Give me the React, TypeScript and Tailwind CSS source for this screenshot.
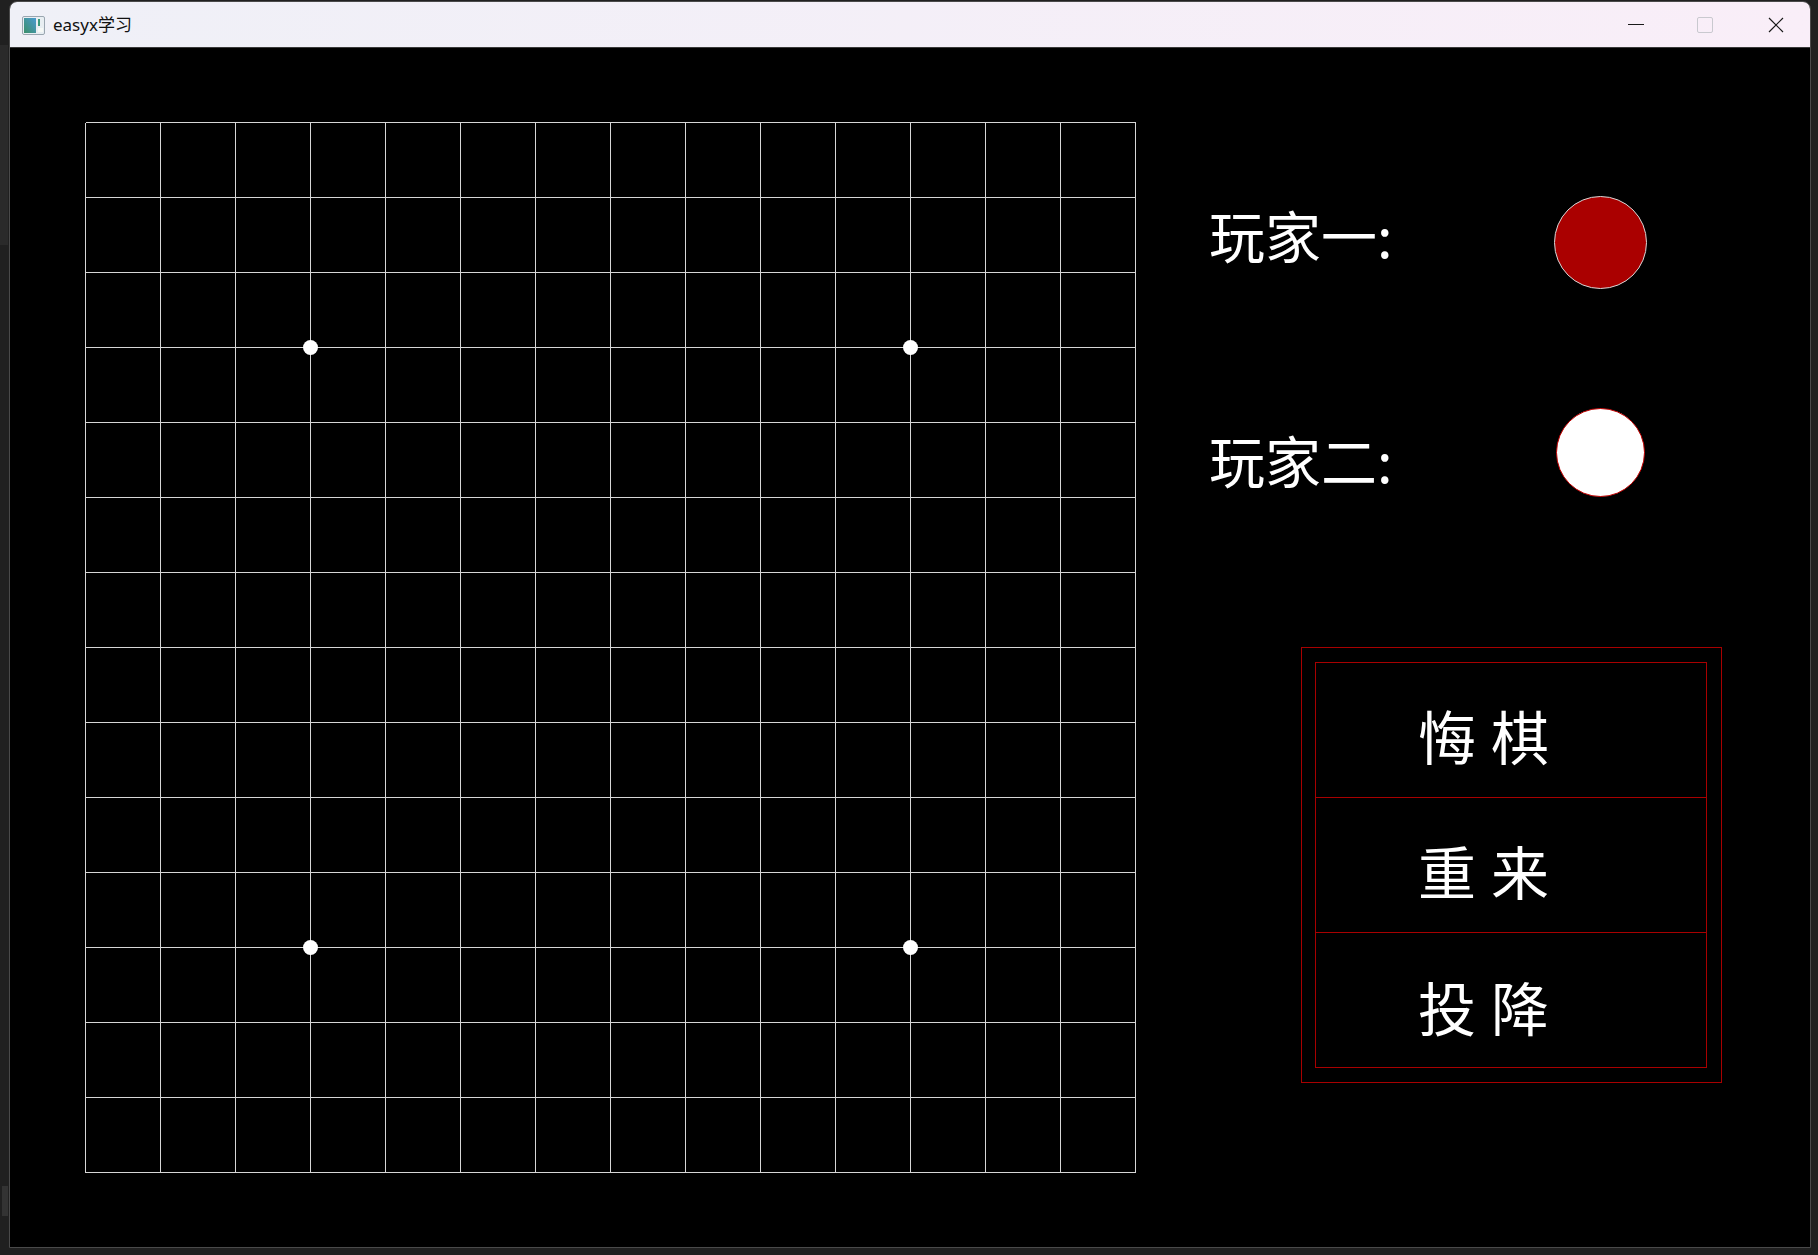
import React from "react";

const CELL = 75;
const N = 15;

function Board() {
  const lines: React.ReactNode[] = [];
  for (let i = 0; i < N; i++) {
    const p = 1.5 + i * CELL;
    lines.push(<line key={`v${i}`} x1={p} y1={1.5} x2={p} y2={1.5 + (N - 1) * CELL} />);
    lines.push(<line key={`h${i}`} x1={1.5} y1={p} x2={1.5 + (N - 1) * CELL} y2={p} />);
  }
  const stars = [
    [3, 3],
    [11, 3],
    [3, 11],
    [11, 11],
  ];
  return (
    <svg width={1053} height={1053} className="shrink-0 block">
      <g stroke="#d6d6d6" strokeWidth={1.5} shapeRendering="crispEdges">
        {lines}
      </g>
      {stars.map(([c, r]) => (
        <circle key={`${c}-${r}`} cx={1.5 + c * CELL} cy={1.5 + r * CELL} r={7.5} fill="#ffffff" />
      ))}
    </svg>
  );
}

function AppIcon() {
  return (
    <svg width="23" height="19" viewBox="0 0 23 19" className="block">
      <defs>
        <linearGradient id="ig" x1="0" y1="1" x2="1" y2="0">
          <stop offset="0" stopColor="#3b8f6a" />
          <stop offset="1" stopColor="#4a9bd0" />
        </linearGradient>
      </defs>
      <rect x="0.5" y="0.5" width="22" height="18" rx="1.5" fill="#e8eef2" stroke="#9aa6b0" />
      <rect x="2" y="2" width="12" height="15" fill="url(#ig)" />
      <rect x="16" y="3" width="2" height="7" fill="#3a9a7a" />
      <rect x="16" y="12" width="5" height="4" fill="#f6f9f6" />
    </svg>
  );
}

const cjk = { fontFamily: '"Noto Sans CJK SC", "Noto Sans", sans-serif' };

export default function App() {
  return (
    <div className="w-[1818px] h-[1255px] bg-[#202020] overflow-hidden relative">
      <div className="absolute left-0 top-[45px] w-[8px] h-[200px] bg-[#2a2a2a]" />
      <div className="absolute left-[2px] top-[1186px] w-[6px] h-[30px] bg-[#333333]" />
      <div className="pl-[9px] pt-[1px]">
        <div className="w-[1802px] h-[1247px] border border-[#4a4a4a] rounded-t-[8px] overflow-hidden flex flex-col bg-black">
          {/* title bar */}
          <div className="h-[46px] shrink-0 flex items-center bg-gradient-to-r from-[#eff0f7] to-[#f9eef8] border-b border-[#3a3a3a]">
            <div className="ml-[12px] mt-[1px]">
              <AppIcon />
            </div>
            <div
              className="ml-[8px] text-[17px] text-[#111111] leading-none"
              style={{ fontFamily: '"Noto Sans", "Noto Sans CJK SC", sans-serif' }}
            >
              easyx学习
            </div>
            <div className="flex-1" />
            <div className="w-[16px] h-[1px] bg-[#1a1a1a] mr-[53px]" />
            <div className="w-[16px] h-[16px] border border-[#c9c9cf] rounded-[2px] mr-[55px]" />
            <svg width="16" height="16" viewBox="0 0 16 16" className="mr-[26px]">
              <path d="M1 1 L15 15 M15 1 L1 15" stroke="#1a1a1a" strokeWidth="1.2" />
            </svg>
          </div>
          {/* canvas */}
          <div className="flex-1 flex items-start pl-[74px] pt-[73px] bg-black">
            <Board />
            <div className="ml-[72px] mt-[75px] flex flex-col">
              <div className="flex items-start">
                <div
                  className="w-[345px] mt-[10px] text-[56px] leading-[56px] text-white whitespace-nowrap"
                  style={cjk}
                >
                  玩家一:
                </div>
                <div className="w-[93px] h-[93px] rounded-full bg-[#aa0000] border border-[#d8d8d8]" />
              </div>
              <div className="flex items-start mt-[119px]">
                <div
                  className="w-[347px] mt-[23px] text-[56px] leading-[56px] text-white whitespace-nowrap"
                  style={cjk}
                >
                  玩家二:
                </div>
                <div className="w-[89px] h-[89px] rounded-full bg-white border border-[#c00000]" />
              </div>
              <div className="ml-[92px] mt-[150px] w-[421px] border border-[#a80000] pt-[14px] pb-[14px] pl-[13px]">
                <div className="w-[392px] border border-[#a80000] flex flex-col">
                  {["悔棋", "重来", "投降"].map((t, i) => (
                    <div
                      key={t}
                      className={
                        i < 2
                          ? "h-[135px] border-b border-[#a80000] pl-[102px] pt-[43px]"
                          : "h-[134px] pl-[102px] pt-[44px]"
                      }
                    >
                      <div
                        className="text-[58px] leading-[58px] tracking-[15px] text-white whitespace-nowrap"
                        style={cjk}
                      >
                        {t}
                      </div>
                    </div>
                  ))}
                </div>
              </div>
            </div>
          </div>
        </div>
      </div>
    </div>
  );
}
